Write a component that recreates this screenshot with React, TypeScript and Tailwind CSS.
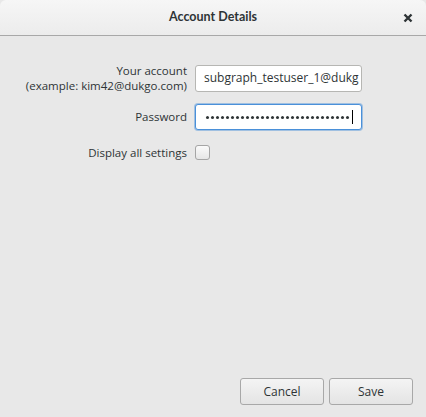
import React from "react";

export default function App() {
  const font = { fontFamily: '"Open Sans", "DejaVu Sans", sans-serif' };
  const dots = Array.from({ length: 29 });
  return (
    <div className="w-[426px] h-[417px] bg-[#e8e8e8] flex flex-col text-[#2e3436]" style={font}>
      <div className="h-[36px] shrink-0 rounded-t-[6px] bg-gradient-to-b from-[#f6f6f6] to-[#ececec] border-b border-[#a8a8a8] flex items-center relative">
        <div className="flex-1 text-center text-[12.5px] font-bold text-[#2e3436] font-['Lato',sans-serif]">Account Details</div>
        <div className="absolute right-[11px] top-[11px] w-[14px] h-[14px] flex items-center justify-center">
          <svg width="10" height="10" viewBox="0 0 10 10">
            <path d="M1.5 1.5 L8.5 8.5 M8.5 1.5 L1.5 8.5" stroke="#2e3436" strokeWidth="2.4" strokeLinecap="butt" />
          </svg>
        </div>
      </div>
      <div className="flex-1 flex flex-col">
        <div className="grid grid-cols-[187px_167px] gap-x-[8px] pt-[27px] items-center">
          <div className="text-right text-[11.5px] leading-[15px]">
            <div>Your account</div>
            <div>(example: kim42@dukgo.com)</div>
          </div>
          <div className="h-[27px] bg-white border border-[#b6b6b3] rounded-[3px] flex items-center pl-[8px] text-[12px] overflow-hidden whitespace-nowrap">
            subgraph_testuser_1@dukg
          </div>
          <div className="text-right text-[11.5px] mt-[11px]">Password</div>
          <div className="mt-[11px] h-[26px] bg-white border border-[#4a90d9] rounded-[3px] shadow-[0_0_0_1px_rgba(74,144,217,0.45)] flex items-center pl-[9px] overflow-hidden">
            {dots.map((_, i) => (
              <span key={i} className="w-[5px] h-[5px] flex items-center justify-center shrink-0">
                <span className="w-[3px] h-[3px] rounded-full bg-[#2e3436]" />
              </span>
            ))}
            <span className="w-[1px] h-[14px] bg-black ml-[2px] shrink-0" />
          </div>
          <div className="text-right text-[11.5px] mt-[14px]">Display all settings</div>
          <div className="mt-[14px]">
            <div className="w-[15px] h-[15px] rounded-[3px] border border-[#a5a5a5] bg-gradient-to-b from-[#fafafa] to-[#e6e6e6]" />
          </div>
        </div>
        <div className="flex-1" />
        <div className="flex justify-end gap-[5px] pr-[13px] pb-[12px]">
          <div className="w-[84px] h-[27px] rounded-[3px] border border-[#a8a8a8] bg-gradient-to-b from-[#f4f4f4] to-[#e4e4e4] flex items-center justify-center text-[12px]">Cancel</div>
          <div className="w-[84px] h-[27px] rounded-[3px] border border-[#a8a8a8] bg-gradient-to-b from-[#f4f4f4] to-[#e4e4e4] flex items-center justify-center text-[12px]">Save</div>
        </div>
      </div>
    </div>
  );
}
